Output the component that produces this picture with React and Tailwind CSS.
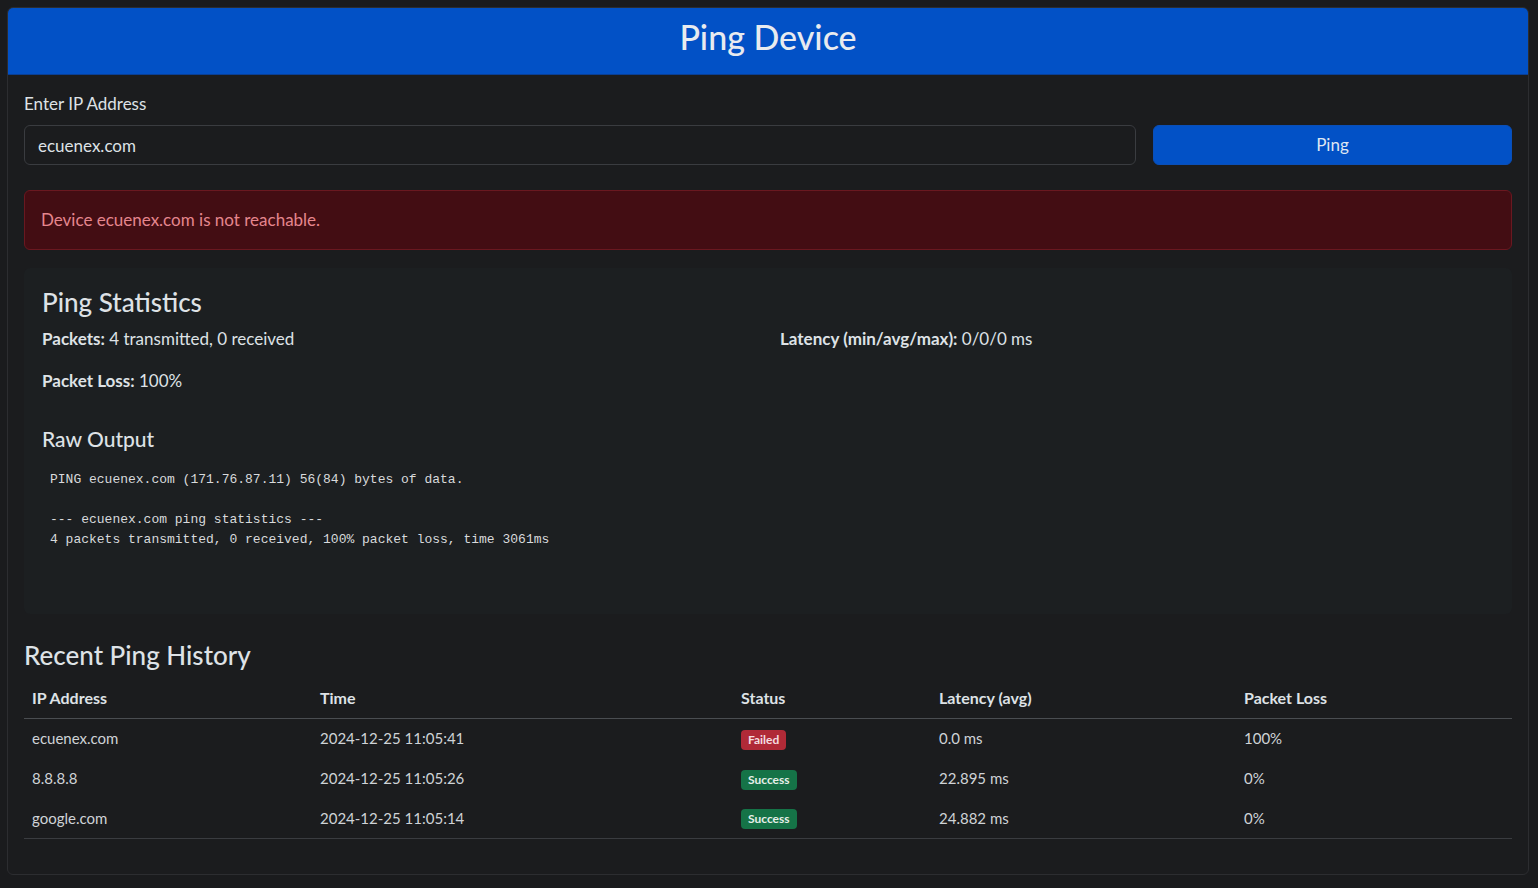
export default function App() {
  const history = [
    { ip: 'ecuenex.com', time: '2024-12-25 11:05:41', ok: false, latency: '0.0 ms', loss: '100%' },
    { ip: '8.8.8.8', time: '2024-12-25 11:05:26', ok: true, latency: '22.895 ms', loss: '0%' },
    { ip: 'google.com', time: '2024-12-25 11:05:14', ok: true, latency: '24.882 ms', loss: '0%' },
  ];
  const raw = `PING ecuenex.com (171.76.87.11) 56(84) bytes of data.

--- ecuenex.com ping statistics ---
4 packets transmitted, 0 received, 100% packet loss, time 3061ms

`;

  return (
    <div className="min-h-[888px] bg-[#1a1b1d] pt-[7px] pl-[7px] font-['Lato','Noto_Sans',sans-serif] text-[#dee2e6]">
      <div className="w-[1522px] h-[868px] border border-[#2c2d30] rounded-[6px] bg-[#1b1c1e] overflow-hidden">
        <div className="h-[67px] bg-[#0251c6] border-b border-[#0a3f94] flex items-center justify-center">
          <h1 className="text-[34px] leading-none font-medium text-[#e8ebef] -mt-[8px]">Ping Device</h1>
        </div>
        <div className="px-4 pt-[17px]">
          <label className="block text-[17px] leading-6 mb-[9px]">Enter IP Address</label>
          <div className="flex gap-[17px]">
            <input
              type="text"
              defaultValue="ecuenex.com"
              className="flex-1 h-10 px-[13px] rounded-[6px] border border-[#3a3c40] bg-[#1b1c1e] text-[17px] text-[#dee2e6] outline-none"
            />
            <button className="w-[359px] h-10 rounded-[6px] bg-[#0251c6] border border-[#0a4fb8] text-[17px] text-[#dfe6f2]">
              Ping
            </button>
          </div>

          <div className="mt-[25px] h-[60px] flex items-center px-4 rounded-[6px] bg-[#430d13] border border-[#6a1820] text-[17px] text-[#e5868e]">
            Device ecuenex.com is not reachable.
          </div>

          <div className="mt-[18px] rounded-[6px] bg-[#1c1f21] px-[18px] pt-5 pb-5">
            <h2 className="text-[26px] leading-[29px] font-medium mb-[10px]">Ping Statistics</h2>
            <div className="grid grid-cols-2 gap-x-6 text-[17px]">
              <div>
                <p className="leading-6 mb-[18px]"><strong className="font-bold">Packets:</strong> 4 transmitted, 0 received</p>
                <p className="leading-6 mb-4"><strong className="font-bold">Packet Loss:</strong> 100%</p>
              </div>
              <div>
                <p className="leading-6 mb-4"><strong className="font-bold">Latency (min/avg/max):</strong> 0/0/0 ms</p>
              </div>
            </div>
            <h3 className="mt-[18px] text-[21px] leading-6 font-medium mb-2">Raw Output</h3>
            <pre className="px-2 pt-[11px] pb-2 font-['Liberation_Mono',monospace] text-[13px] leading-5 text-[#d8dadc] mb-4">{raw}</pre>
          </div>

          <h2 className="mt-[27px] text-[26px] leading-[29px] font-medium mb-2">Recent Ping History</h2>
          <table className="w-full table-fixed border-collapse">
            <thead>
              <tr className="border-b border-[#4a4d51] text-[16px]">
                <th className="w-[288px] text-left font-bold px-2 h-10">IP Address</th>
                <th className="w-[421px] text-left font-bold px-2 h-10">Time</th>
                <th className="w-[198px] text-left font-bold px-2 h-10">Status</th>
                <th className="w-[305px] text-left font-bold px-2 h-10">Latency (avg)</th>
                <th className="text-left font-bold px-2 h-10">Packet Loss</th>
              </tr>
            </thead>
            <tbody className="border-b border-[#3a3c40] text-[15px] text-[#cfd3d7]">
              {history.map((h, i) => (
                <tr key={i}>
                  <td className="px-2 h-10">{h.ip}</td>
                  <td className="px-2 h-10">{h.time}</td>
                  <td className="px-2 h-10">
                    {h.ok ? (
                      <span className="inline-flex items-center h-5 px-[7px] rounded-[4px] bg-[#157347] text-[#e6efe9] text-[12px] font-bold">Success</span>
                    ) : (
                      <span className="inline-flex items-center h-5 px-[7px] rounded-[4px] bg-[#b02a37] text-[#f4dde0] text-[12px] font-bold">Failed</span>
                    )}
                  </td>
                  <td className="px-2 h-10">{h.latency}</td>
                  <td className="px-2 h-10">{h.loss}</td>
                </tr>
              ))}
            </tbody>
          </table>
        </div>
      </div>
    </div>
  );
}
